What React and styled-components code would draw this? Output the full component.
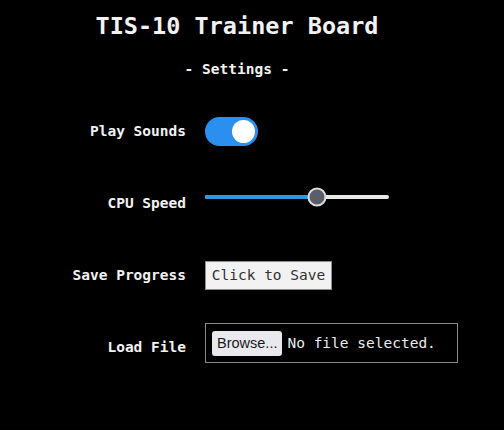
import React, { useState } from 'react';
import styled, { createGlobalStyle } from 'styled-components';

const GlobalStyle = createGlobalStyle`
  html, body {
    margin: 0;
    padding: 0;
    background: #000;
  }
  body {
    font-family: "DejaVu Sans Mono", "Liberation Mono", monospace;
    color: #f2f2f2;
  }
`;

const Page = styled.div`
  width: 474px;
  height: 430px;
  background: #000;
  padding-top: 12px;
  box-sizing: border-box;
`;

const Title = styled.h1`
  margin: 0;
  font-size: 23.5px;
  font-weight: bold;
  line-height: 28px;
  text-align: center;
`;

const Subtitle = styled.h2`
  margin: 21px 0 0;
  font-size: 14.5px;
  font-weight: bold;
  line-height: 17px;
  text-align: center;
`;

const Form = styled.div`
  display: grid;
  grid-template-columns: 186px 1fr;
  grid-auto-rows: 72px;
  column-gap: 19px;
  margin-top: 17px;
`;

const Label = styled.div`
  align-self: center;
  text-align: right;
  font-size: 14.5px;
  font-weight: bold;
  line-height: 17px;
`;

const Control = styled.div`
  display: flex;
  align-items: center;
`;

const Toggle = styled.button`
  width: 53px;
  height: 29px;
  border: none;
  border-radius: 15px;
  padding: 3px;
  background: ${p => (p.$on ? '#2b8ff0' : '#555')};
  display: flex;
  justify-content: ${p => (p.$on ? 'flex-end' : 'flex-start')};
  cursor: pointer;
`;

const Knob = styled.span`
  width: 23px;
  height: 23px;
  border-radius: 50%;
  background: #fff;
`;

const Slider = styled.div`
  position: relative;
  width: 184px;
  height: 4px;
  border-radius: 2px;
  background: #e8e8e8;
  margin-top: -12px;
`;

const SliderFill = styled.div`
  height: 100%;
  border-radius: 2px;
  background: #2a9be2;
`;

const Thumb = styled.div`
  position: absolute;
  top: 50%;
  width: 15px;
  height: 15px;
  border-radius: 50%;
  background: #5c5d6b;
  border: 2px solid #dcdcdc;
  transform: translate(-50%, -50%);
`;

const SaveButton = styled.button`
  font-family: "DejaVu Sans Mono", "Liberation Mono", monospace;
  font-size: 14.5px;
  color: #333;
  background: #f2f2f2;
  border: 1px solid #8c8c8c;
  height: 29px;
  width: 127px;
  padding: 0;
  cursor: pointer;
`;

const FileBox = styled.div`
  display: flex;
  align-items: center;
  gap: 5px;
  width: 253px;
  height: 40px;
  box-sizing: border-box;
  border: 1px solid #8a8a8a;
  padding: 0 6px;
  margin-top: -8px;
`;

const BrowseButton = styled.span`
  font-family: "Liberation Sans", Arial, sans-serif;
  font-size: 14.5px;
  color: #1a1a1a;
  background: #e9e9ed;
  border-radius: 3px;
  height: 25px;
  padding: 0 5px;
  display: flex;
  align-items: center;
`;

const FileName = styled.span`
  font-size: 14.5px;
  color: #ececec;
`;

export default function App() {
  const [sound, setSound] = useState(true);
  const speed = 61;

  return (
    <Page>
      <GlobalStyle />
      <Title>TIS-10 Trainer Board</Title>
      <Subtitle>- Settings -</Subtitle>
      <Form>
        <Label>Play Sounds</Label>
        <Control>
          <Toggle $on={sound} onClick={() => setSound(!sound)}>
            <Knob />
          </Toggle>
        </Control>

        <Label>CPU Speed</Label>
        <Control>
          <Slider>
            <SliderFill style={{ width: `${speed}%` }} />
            <Thumb style={{ left: `${speed}%` }} />
          </Slider>
        </Control>

        <Label>Save Progress</Label>
        <Control>
          <SaveButton>Click to Save</SaveButton>
        </Control>

        <Label>Load File</Label>
        <Control>
          <FileBox>
            <BrowseButton>Browse...</BrowseButton>
            <FileName>No file selected.</FileName>
          </FileBox>
        </Control>
      </Form>
    </Page>
  );
}
